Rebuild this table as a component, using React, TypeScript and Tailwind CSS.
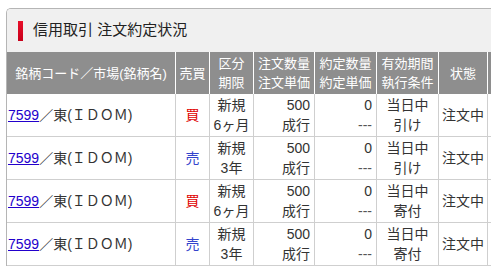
const ROWS = [
  { side: "買", term: "6ヶ月", cond: "引け" },
  { side: "売", term: "3年", cond: "引け" },
  { side: "買", term: "6ヶ月", cond: "寄付" },
  { side: "売", term: "3年", cond: "寄付" },
];

const COLS = "grid-cols-[169px_34px_44px_61px_62px_62px_49px_80px]";

function Head({ children }: { children: React.ReactNode }) {
  return (
    <div className="flex h-[42px] flex-col items-center justify-center border-r border-white bg-[#8e8e8e] text-center text-[13px] leading-[19px] text-white">
      {children}
    </div>
  );
}

function Cell({ children, className = "" }: { children?: React.ReactNode; className?: string }) {
  return (
    <div className={`flex h-[43px] flex-col justify-center border-r border-b border-[#cfcfcf] text-[14px] leading-[20px] text-[#333] ${className}`}>
      {children}
    </div>
  );
}

export default function App() {
  return (
    <div
      className="h-[276px] w-[491px] overflow-hidden bg-white"
      style={{ fontFamily: '"Liberation Sans", "Noto Sans CJK JP", sans-serif' }}
    >
      <div className="ml-[6px] mt-[8px] w-[600px] overflow-hidden rounded-tl-[5px] border-l border-t border-[#b5b5b5]">
        <div className="flex h-[43px] items-center bg-[#f0f0f0]">
          <div className="ml-[11px] h-[20px] w-[5px] bg-gradient-to-b from-[#e8102a] to-[#c8001a]" />
          <h1 className="ml-[10px] text-[15px] text-[#222]">信用取引 注文約定状況</h1>
        </div>

        <div className={`grid ${COLS}`}>
          <Head>銘柄コード／市場(銘柄名)</Head>
          <Head>売買</Head>
          <Head>
            <span>区分</span>
            <span>期限</span>
          </Head>
          <Head>
            <span>注文数量</span>
            <span>注文単価</span>
          </Head>
          <Head>
            <span>約定数量</span>
            <span>約定単価</span>
          </Head>
          <Head>
            <span>有効期間</span>
            <span>執行条件</span>
          </Head>
          <Head>状態</Head>
          <Head>&nbsp;</Head>

          {ROWS.map((r, i) => (
            <div key={i} className="contents">
              <Cell className="pl-[1px]">
                <span>
                  <a href="#" className="text-[#2200cc] underline">
                    7599
                  </a>
                  ／東(ＩＤＯＭ)
                </span>
              </Cell>
              <Cell className={`items-center ${r.side === "買" ? "text-[#e00000]" : "text-[#3344cc]"}`}>
                {r.side}
              </Cell>
              <Cell className="items-center">
                <span>新規</span>
                <span>{r.term}</span>
              </Cell>
              <Cell className="items-end pr-[4px]">
                <span>500</span>
                <span>成行</span>
              </Cell>
              <Cell className="items-end pr-[4px]">
                <span>0</span>
                <span className="text-[#555]">---</span>
              </Cell>
              <Cell className="items-center">
                <span>当日中</span>
                <span>{r.cond}</span>
              </Cell>
              <Cell className="items-center">注文中</Cell>
              <Cell />
            </div>
          ))}
        </div>
      </div>
    </div>
  );
}
